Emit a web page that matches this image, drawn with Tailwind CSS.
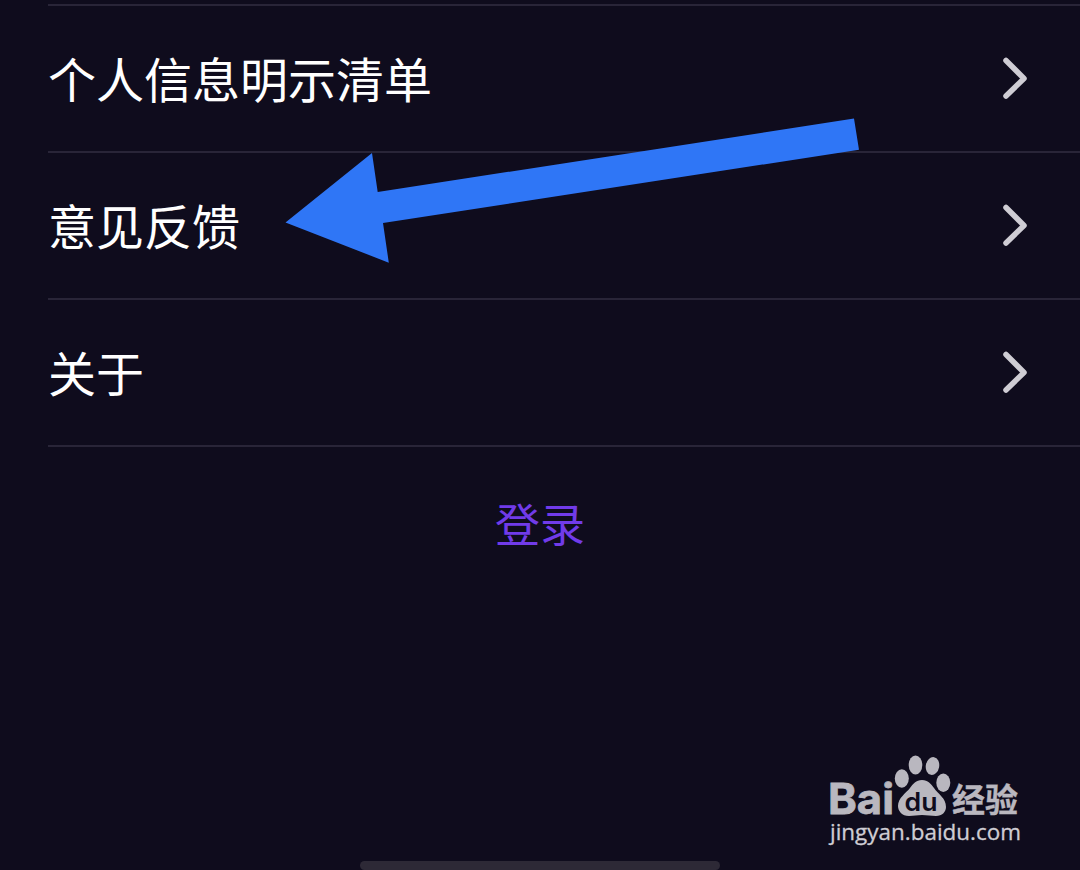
<!DOCTYPE html>
<html lang="zh-CN">
 <head>
  <meta charset="utf-8"/>
  <meta content="width=device-width, initial-scale=1.0" name="viewport"/>
  <title>设置</title>
  <script src="https://cdn.jsdelivr.net/npm/@tailwindcss/browser@4"></script>
 </head>
 <body class="bg-[#0f0c1d] font-['Noto_Sans_CJK_SC',sans-serif]">
  <main class="relative flex h-[870px] w-[1080px] flex-col overflow-hidden pt-1">
   <!-- Settings list -->
   <ul class="ml-12 border-t-2 border-[#292538] text-[48px] leading-none text-white">
    <li class="flex h-[147px] items-center justify-between border-b-2 border-[#292538] pr-[50px]">
     <span class="pb-[3px]">个人信息明示清单</span>
     <svg class="mb-0.5 h-12 w-8" viewBox="0 0 32 48" fill="none" stroke="#cfcdd4" stroke-width="5.500" stroke-linecap="round" stroke-linejoin="round"><path d="M8 6.500 26 24.500 8 42"/></svg>
    </li>
    <li class="flex h-[147px] items-center justify-between border-b-2 border-[#292538] pr-[50px]">
     <span class="pb-[3px]">意见反馈</span>
     <svg class="mb-0.5 h-12 w-8" viewBox="0 0 32 48" fill="none" stroke="#cfcdd4" stroke-width="5.500" stroke-linecap="round" stroke-linejoin="round"><path d="M8 6.500 26 24.500 8 42"/></svg>
    </li>
    <li class="flex h-[147px] items-center justify-between border-b-2 border-[#292538] pr-[50px]">
     <span class="pb-[3px]">关于</span>
     <svg class="mb-0.5 h-12 w-8" viewBox="0 0 32 48" fill="none" stroke="#cfcdd4" stroke-width="5.500" stroke-linecap="round" stroke-linejoin="round"><path d="M8 6.500 26 24.500 8 42"/></svg>
    </li>
   </ul>

   <!-- Login -->
   <button class="mt-[53px] self-center text-[45px] leading-none text-[#713be9]">登录</button>

   <!-- Arrow pointing at the feedback row -->
   <svg class="absolute left-[280px] top-[110px]" width="590" height="160" viewBox="280 110 590 160">
    <path fill="#2f76f6" d="M285.500 222.500 372 153l5.700 39L854 118.500l5 31.200L383 223l5.800 39.700z"/>
   </svg>

   <!-- Watermark -->
   <svg class="absolute left-[820px] top-[750px]" width="210" height="105" viewBox="820 750 210 105" fill="#b9b7bf">
    <text x="828" y="814" font-family="Inter" font-weight="700" font-size="42" textLength="66" lengthAdjust="spacingAndGlyphs" stroke="#b9b7bf" stroke-width=".8">Bai</text>
    <ellipse cx="901.800" cy="778.500" rx="7" ry="9.300"/>
    <ellipse cx="915.500" cy="765" rx="6.800" ry="9.500"/>
    <ellipse cx="932.500" cy="766" rx="6.700" ry="9" transform="rotate(10 932.500 766)"/>
    <ellipse cx="943.300" cy="782.800" rx="7" ry="9.200"/>
    <path d="M922 780c6 0 9 4 12 8 4 6 12 10 12 19 0 5-4 9-10 9-5 0-9-1-14-1s-8 1-13 1c-7 0-11-5-11-10 0-8 8-13 12-18 3-4 6-8 12-8z"/>
    <text x="904.500" y="810.500" fill="#0f0c1d" font-family="Inter" font-weight="600" font-size="25" textLength="33" lengthAdjust="spacingAndGlyphs">du</text>
    <text x="952" y="812" font-family="Noto Sans CJK SC" font-weight="bold" font-size="33" textLength="66" lengthAdjust="spacingAndGlyphs" stroke="#b9b7bf" stroke-width=".4">经验</text>
    <text x="830" y="840" fill="#cfcdd4" font-family="Open Sans" font-weight="500" font-size="21.500" textLength="191" lengthAdjust="spacingAndGlyphs" stroke="#cfcdd4" stroke-width=".3">jingyan.baidu.com</text>
   </svg>

   <!-- Home indicator -->
   <div class="absolute left-[360px] top-[861px] h-[9px] w-[360px] rounded-full bg-[#2d2936]"></div>
  </main>
 </body>
</html>
